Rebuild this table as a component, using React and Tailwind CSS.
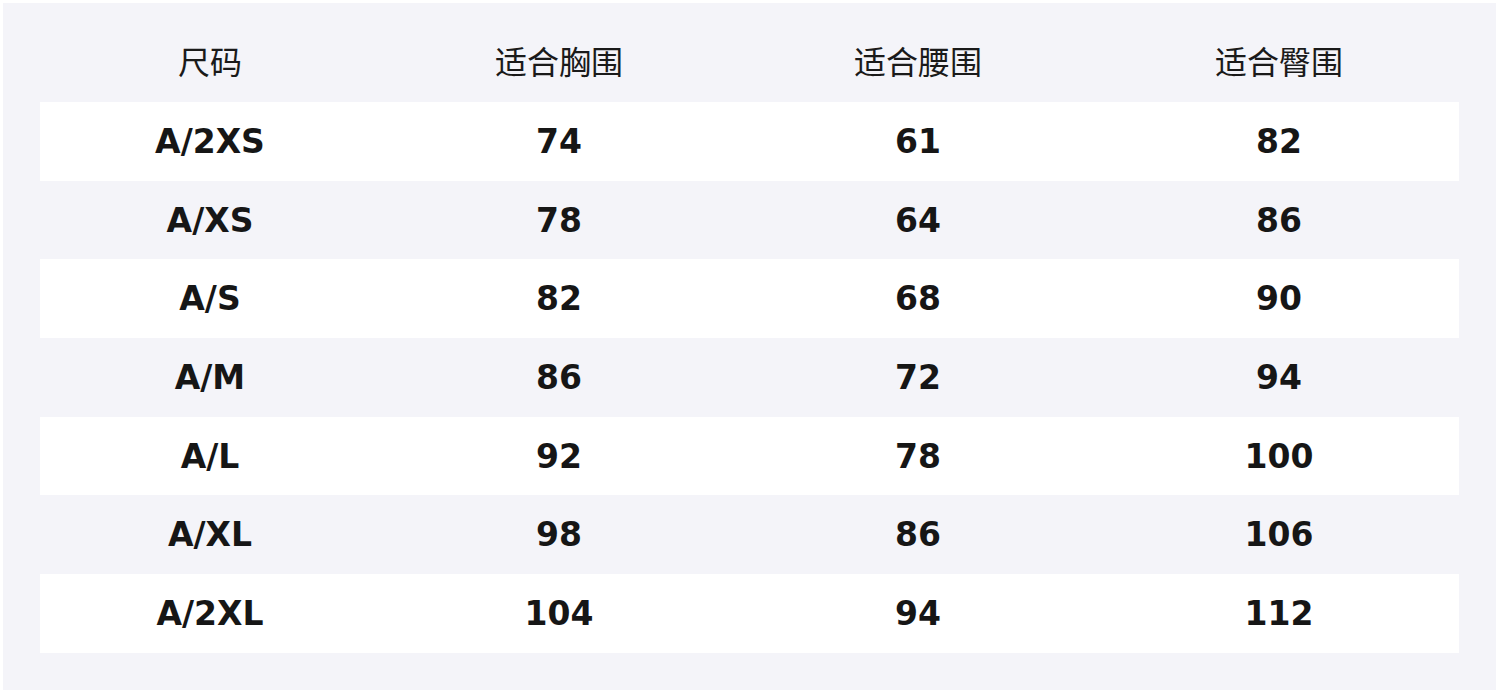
import React from 'react';

const rows = [
  ['A/2XS', '74', '61', '82'],
  ['A/XS', '78', '64', '86'],
  ['A/S', '82', '68', '90'],
  ['A/M', '86', '72', '94'],
  ['A/L', '92', '78', '100'],
  ['A/XL', '98', '86', '106'],
  ['A/2XL', '104', '94', '112'],
];

const headers = ['尺码', '适合胸围', '适合腰围', '适合臀围'];

const cols = 'grid grid-cols-[340px_358px_360px_362px]';

export default function App() {
  return (
    <div className="w-[1500px] h-[694px] bg-white p-[3px]">
      <div className="w-[1493px] h-[687px] bg-[#f4f4f9] pt-[20px] px-[37px]">
        {/* Header */}
        <div className={`${cols} h-[79px] items-center pb-[6px] text-[32px] text-[#1a1a1a] font-['Noto_Sans_CJK_SC','Noto_Sans',sans-serif]`}>
          {headers.map((h) => (
            <div key={h} className="text-center leading-none">{h}</div>
          ))}
        </div>

        {/* Body */}
        {rows.map((row, i) => (
          <div
            key={row[0]}
            className={`${cols} h-[78.7px] items-center text-[33px] font-bold text-[#161616] font-['DejaVu_Sans',sans-serif] ${i % 2 === 0 ? 'bg-white' : ''}`}
          >
            {row.map((cell, j) => (
              <div key={j} className="text-center leading-none">{cell}</div>
            ))}
          </div>
        ))}
      </div>
    </div>
  );
}
